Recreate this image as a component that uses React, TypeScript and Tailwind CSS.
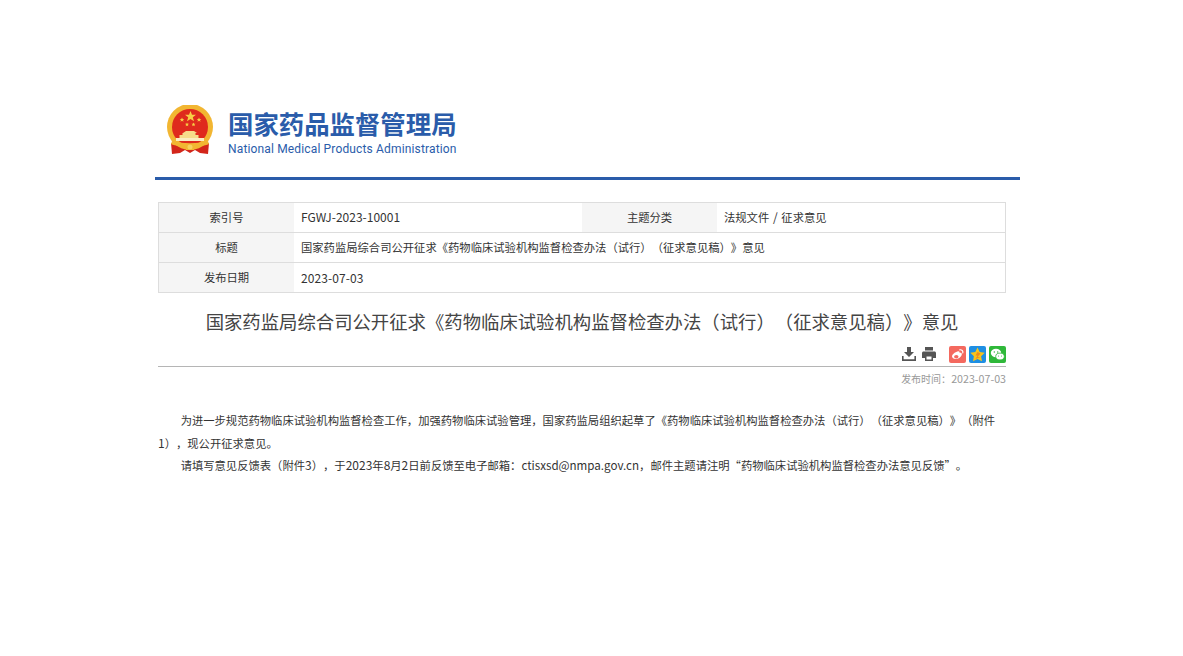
const cjk = "font-['Noto_Sans_CJK_SC','Noto_Sans',sans-serif]";

const Emblem = () => (
  <svg width="48" height="50" viewBox="0 0 48 50">
    <path d="M5 38h38l-1 11-8-1-5-3-5 3-5-3-5 3-8 1z" fill="#d3261a" />
    <circle cx="24" cy="22" r="23" fill="#f2b632" />
    <circle cx="24" cy="22" r="18" fill="#df2a1d" />
    <path d="M24.500 6l1.500 3.700h4l-3.200 2.500 1.200 4-3.500-2.300-3.500 2.300 1.200-4-3.200-2.500h4z" fill="#f6cf45" />
    <path d="M16 12.500l.7 1.500h1.600l-1.300 1 .5 1.700-1.500-1-1.500 1 .5-1.700-1.300-1h1.600zM33 12.500l.7 1.500h1.600l-1.300 1 .5 1.700-1.500-1-1.500 1 .5-1.700-1.300-1h1.600zM21 17.500l.6 1.300h1.400l-1.100 1 .4 1.400-1.300-.8-1.300.8.4-1.400-1.100-1h1.400zM27.500 17.500l.6 1.300h1.400l-1.100 1 .4 1.400-1.300-.8-1.300.8.4-1.400-1.100-1h1.400z" fill="#f6cf45" />
    <path d="M17 28l3-2h8l3 2h-1.500v2h3v4h-19v-4h3v-2z" fill="#f6dc8a" />
    <path d="M6 36c9 3 27 3 36 0l1 3c-9 4-29 4-38 0z" fill="#f2b632" />
    <path d="M10 33h28v3H10z" fill="#fbeec2" />
    <path d="M20 40h8v5h-8z" fill="#f2b632" />
    <circle cx="24" cy="42" r="2.500" fill="#f7d25f" />
  </svg>
);

const Num = ({ children }: { children: React.ReactNode }) => <span className="text-[12px]">{children}</span>;

export default function App() {
  return (
    <div className={`h-[656px] w-[1183px] bg-white pt-[100px] ${cjk} text-[11.32px] text-[#333333] [text-spacing-trim:space-all]`}>
      <div className="ml-[155px] w-[865px]">
        <div className="box-content flex h-[77px] border-b-[3px] border-[#2a5caa]">
          <div className="ml-[11px] mt-[5px]">
            <Emblem />
          </div>
          <div className="ml-[14px] mt-[6px] flex flex-col">
            <span className="text-[25.4px] font-bold leading-[34px] text-[#2a5caa]">国家药品监督管理局</span>
            <span className="mt-[1px] font-['Roboto',sans-serif] text-[12px] leading-[16px] tracking-[0.15px] text-[#2a5caa]">
              National Medical Products Administration
            </span>
          </div>
        </div>

        <div className="ml-[3px] mt-[22px] w-[848px] border border-[#dddddd]">
          <div className="flex h-[30px] border-b border-[#dddddd]">
            <div className="flex w-[135px] shrink-0 items-center justify-center bg-[#f5f5f5] pb-[1px]">索引号</div>
            <div className="flex w-[288px] items-center pb-[1px] pl-[7px] text-[12px]">FGWJ-2023-10001</div>
            <div className="flex w-[135px] shrink-0 items-center justify-center bg-[#f5f5f5] pb-[1px]">主题分类</div>
            <div className="flex flex-1 items-center pb-[1px] pl-[7px]">
              <span>法规文件<span className="mx-[1px] text-[12px]"> / </span>征求意见</span>
            </div>
          </div>
          <div className="flex h-[30px] border-b border-[#dddddd]">
            <div className="flex w-[135px] shrink-0 items-center justify-center bg-[#f5f5f5] pb-[1px]">标题</div>
            <div className="flex flex-1 items-center pb-[1px] pl-[7px]">
              国家药监局综合司公开征求《药物临床试验机构监督检查办法（试行）（征求意见稿）》意见
            </div>
          </div>
          <div className="flex h-[29px]">
            <div className="flex w-[135px] shrink-0 items-center justify-center bg-[#f5f5f5]">发布日期</div>
            <div className="flex flex-1 items-center pl-[7px] text-[12px] tracking-[0.1px]">2023-07-03</div>
          </div>
        </div>

        <h1 className="ml-[3px] mt-[13px] w-[848px] text-center text-[18.36px] font-normal leading-[30px] text-[#444444]">
          国家药监局综合司公开征求《药物临床试验机构监督检查办法（试行）（征求意见稿）》意见
        </h1>

        <div className="ml-[3px] mt-[10px] box-content flex h-[18px] w-[848px] items-start justify-end border-b border-[#b5b5b5] pb-[2px]">
          <svg width="14" height="14" viewBox="0 0 14 14" className="mt-[1px]" fill="#555555">
            <path d="M5 0h4v5h3L7 10 2 5h3zM0 9h1.600v3.200h10.800V9H14v5H0z" />
          </svg>
          <svg width="14" height="14" viewBox="0 0 14 14" className="ml-[6px] mt-[1px]" fill="#555555">
            <path d="M3 0h8v3.500H3zM1.500 4.500h11c.8 0 1.500.7 1.500 1.500v5h-3v3H3v-3H0V6c0-.8.7-1.500 1.500-1.500zM4.500 9.500V12.500h5V9.500z" />
          </svg>
          <svg width="17" height="17" viewBox="0 0 17 17" className="ml-[13px]">
            <rect width="17" height="17" rx="2" fill="#f4695f" />
            <path d="M7.200 6c1.500-1 3.200-1 3.400.2.100.5 0 .8 0 .8s1.800-.6 2.200.7c.3 1-.5 2.200-1 2.900-1 1.400-2.800 2.400-5 2.400-2.300 0-3.800-1.200-3.800-2.800C3 8.700 5 7 7.200 6z" fill="#ffffff" />
            <ellipse cx="7.300" cy="10.800" rx="2.200" ry="1.700" fill="#f4695f" />
            <path d="M10.800 3.800c1.900-.4 3.500 1.200 3 3.100" fill="none" stroke="#ffffff" strokeWidth="1.200" strokeLinecap="round" />
          </svg>
          <svg width="17" height="17" viewBox="0 0 17 17" className="ml-[3px]">
            <rect width="17" height="17" rx="2" fill="#1f8fe3" />
            <path d="M8.500 1.500l2.200 4.600 5 .7-3.600 3.500.9 5-4.500-2.400-4.500 2.400.9-5L1.300 6.800l5-.7z" fill="#f9c41c" />
            <path d="M8.500 6l3 1.500-3 3.500h3l-5 2 2-3.500h-2z" fill="#f08a1d" />
          </svg>
          <svg width="17" height="17" viewBox="0 0 17 17" className="ml-[3px]">
            <rect width="17" height="17" rx="2" fill="#2fb83a" />
            <ellipse cx="7" cy="7" rx="5.200" ry="4.200" fill="#ffffff" />
            <ellipse cx="11" cy="10.500" rx="4.300" ry="3.400" fill="#ffffff" stroke="#2fb83a" strokeWidth="0.800" />
            <circle cx="5.300" cy="6" r="0.700" fill="#2fb83a" />
            <circle cx="8.700" cy="6" r="0.700" fill="#2fb83a" />
            <circle cx="9.500" cy="10" r="0.500" fill="#2fb83a" />
            <circle cx="12.500" cy="10" r="0.500" fill="#2fb83a" />
          </svg>
        </div>

        <div className="ml-[3px] mt-[4px] w-[848px] text-right text-[10px] leading-[16px] text-[#999999]">
          发布时间：<span className="text-[10.7px]">2023-07-03</span>
        </div>

        <div className="ml-[3px] mt-[22px] w-[848px] leading-[22.5px] text-[#333333]">
          <p className="indent-[2em]">
            为进一步规范药物临床试验机构监督检查工作，加强药物临床试验管理，国家药监局组织起草了《药物临床试验机构监督检查办法（试行）（征求意见稿）》（附件<Num>1</Num>），现公开征求意见。
          </p>
          <p className="indent-[2em]">
            请填写意见反馈表（附件<Num>3</Num>），于<Num>2023</Num>年<Num>8</Num>月<Num>2</Num>日前反馈至电子邮箱：<span className="text-[11.6px]">ctisxsd@nmpa.gov.cn</span>，邮件主题请注明“药物临床试验机构监督检查办法意见反馈”。
          </p>
        </div>
      </div>
    </div>
  );
}
